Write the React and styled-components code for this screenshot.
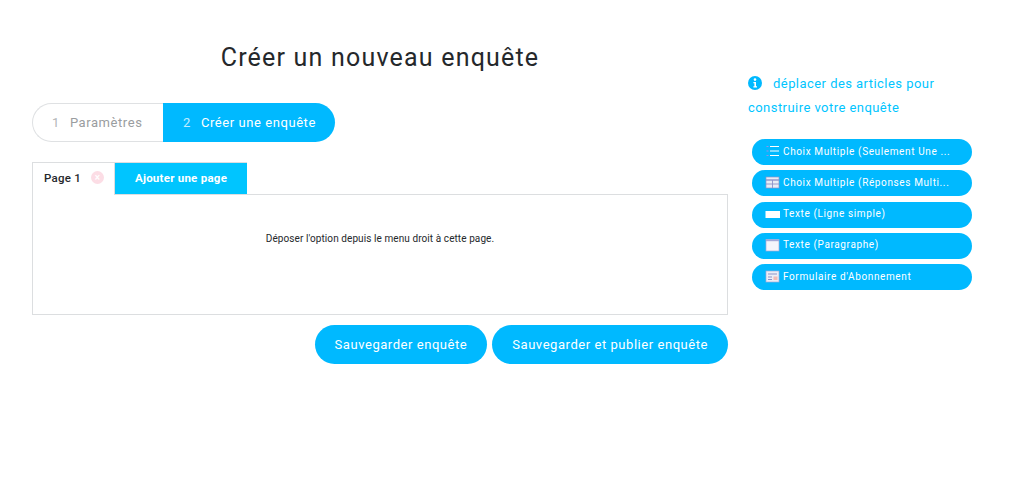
import React from "react";
import styled, { createGlobalStyle } from "styled-components";

const Global = createGlobalStyle`
  html, body { margin: 0; background: #fff; }
  body { font-family: Roboto, "Liberation Sans", sans-serif; }
`;

const Page = styled.div`
  width: 1024px;
  height: 480px;
  overflow: hidden;
  display: flex;
  align-items: flex-start;
  padding-left: 32px;
  box-sizing: border-box;
`;

const Main = styled.main`
  width: 696px;
  padding-top: 43px;
`;

const Title = styled.h1`
  margin: 0;
  height: 29px;
  font-size: 25px;
  line-height: 29px;
  font-weight: 400;
  letter-spacing: 1.2px;
  text-align: center;
  color: #25282b;
`;

const Stepper = styled.div`
  display: flex;
  margin-top: 31px;
  height: 39px;
`;

const Step = styled.div`
  display: flex;
  align-items: center;
  box-sizing: border-box;
  font-size: 13px;
  letter-spacing: 0.57px;
  width: ${(p) => (p.$active ? "172px" : "131px")};
  padding-left: ${(p) => (p.$active ? "20px" : "19px")};
  color: ${(p) => (p.$active ? "#fff" : "#9a9da0")};
  background: ${(p) => (p.$active ? "#00b9ff" : "#fff")};
  border: ${(p) => (p.$active ? "none" : "1px solid #dfe1e3")};
  border-right: none;
  border-radius: ${(p) => (p.$active ? "0 20px 20px 0" : "20px 0 0 20px")};
`;

const StepNumber = styled.span`
  margin-right: 10px;
  opacity: 0.75;
`;

const Tabs = styled.div`
  display: flex;
  margin-top: 20px;
  height: 32px;
`;

const Tab = styled.div`
  display: flex;
  align-items: center;
  box-sizing: border-box;
  width: 83px;
  height: 33px;
  padding: 0 0 3px 11px;
  background: #fff;
  border: 1px solid #dcdee0;
  border-bottom: none;
  position: relative;
  z-index: 1;
  font-size: 11.5px;
  font-weight: 500;
  letter-spacing: 0.25px;
  color: #25282b;
`;

const TabClose = styled.span`
  width: 13px;
  height: 13px;
  margin-left: 10px;
  border-radius: 50%;
  background: #fcdde5;
  display: flex;
  align-items: center;
  justify-content: center;
  color: #fff;
  font-size: 10px;
  line-height: 1;
`;

const AddTab = styled.button`
  width: 132px;
  height: 32px;
  padding: 0 0 2px;
  border: none;
  border-top: 1px solid #dcdee0;
  background: #00c5ff;
  color: #fff;
  font-family: inherit;
  font-size: 11.5px;
  font-weight: 700;
  letter-spacing: 0.25px;
`;

const Panel = styled.section`
  box-sizing: border-box;
  height: 121px;
  padding-top: 37px;
  border: 1px solid #dcdee0;
  text-align: center;
  font-size: 10px;
  line-height: 14px;
  letter-spacing: 0.08px;
  color: #25282b;
`;

const Actions = styled.div`
  display: flex;
  justify-content: flex-end;
  gap: 5px;
  margin-top: 10px;
`;

const ActionButton = styled.button`
  height: 39px;
  padding: 0 20px;
  border: none;
  border-radius: 20px;
  background: #00b9ff;
  color: #fff;
  font-family: inherit;
  font-size: 13px;
  letter-spacing: 0.55px;
  white-space: nowrap;
`;

const Side = styled.aside`
  width: 232px;
  margin-left: 20px;
  padding-top: 72px;
`;

const Hint = styled.p`
  margin: 0;
  font-size: 13px;
  line-height: 24px;
  letter-spacing: 0.45px;
  color: #00c5ff;
`;

const HintIcon = styled.svg`
  width: 14px;
  height: 14px;
  margin-right: 11px;
  vertical-align: -2px;
`;

const Palette = styled.ul`
  list-style: none;
  margin: 19px 0 0 4px;
  padding: 0;
  width: 220px;
  display: flex;
  flex-direction: column;
  gap: 5.25px;
`;

const PaletteItem = styled.li`
  display: flex;
  align-items: center;
  box-sizing: border-box;
  height: 26px;
  padding: 0 12px 2px 13px;
  border-radius: 14px;
  background: #00b9ff;
  color: #fff;
  font-size: 10px;
  letter-spacing: 0.62px;
`;

const ItemIcon = styled.svg`
  flex: none;
  width: 15px;
  height: 14px;
  margin-right: 3px;
`;

const ItemLabel = styled.span`
  white-space: nowrap;
`;

const icons = {
  list: (
    <>
      <path d="M5 2.5h9M5 7h9M5 11.5h9" stroke="#fff" strokeWidth="1" />
      <path d="M1.5 2.5h2M1.5 7h2M1.5 11.5h2" stroke="#9a8de8" strokeWidth="1" />
    </>
  ),
  grid: (
    <>
      <rect x="1" y="2" width="13" height="11" fill="#e9ecf5" stroke="#8d93c9" strokeWidth="0.7" />
      <path d="M1 5h13" stroke="#8d93c9" strokeWidth="1.4" />
      <path d="M7.5 5v8M1 9h13" stroke="#8d93c9" strokeWidth="0.9" />
    </>
  ),
  line: <rect x="0.5" y="4" width="14.5" height="7" fill="#fff" />,
  paragraph: (
    <>
      <rect x="1" y="1.5" width="13" height="11.5" fill="#f4f5fb" stroke="#a4a8d8" strokeWidth="0.7" />
      <path d="M1 2.5h13" stroke="#a4a8d8" strokeWidth="1.4" />
    </>
  ),
  form: (
    <>
      <rect x="1" y="2" width="13" height="11" fill="#eceef6" stroke="#a4a8d8" strokeWidth="0.7" />
      <path d="M3 5h9M3 8h4M3 10.5h4" stroke="#8d93c9" strokeWidth="1" />
      <rect x="8.5" y="7.5" width="4" height="3.5" fill="#f59b8f" opacity="0.6" />
    </>
  ),
};

const items = [
  ["list", "Choix Multiple (Seulement Une ..."],
  ["grid", "Choix Multiple (Réponses Multi..."],
  ["line", "Texte (Ligne simple)"],
  ["paragraph", "Texte (Paragraphe)"],
  ["form", "Formulaire d'Abonnement"],
];

const App = () => {
  return (
    <Page>
      <Global />
      <Main>
        <Title>Créer un nouveau enquête</Title>
        <Stepper>
          <Step>
            <StepNumber>1</StepNumber> Paramètres
          </Step>
          <Step $active>
            <StepNumber>2</StepNumber> Créer une enquête
          </Step>
        </Stepper>
        <Tabs>
          <Tab>
            Page 1
            <TabClose>×</TabClose>
          </Tab>
          <AddTab>Ajouter une page</AddTab>
        </Tabs>
        <Panel>Déposer l'option depuis le menu droit à cette page.</Panel>
        <Actions>
          <ActionButton>Sauvegarder enquête</ActionButton>
          <ActionButton>Sauvegarder et publier enquête</ActionButton>
        </Actions>
      </Main>
      <Side>
        <Hint>
          <HintIcon viewBox="0 0 14 14">
            <circle cx="7" cy="7" r="7" fill="#00b9ff" />
            <circle cx="7" cy="3.6" r="1.3" fill="#fff" />
            <path d="M5.4 6h2.6v4.2h1v1.2H5.4v-1.2h1V7.2h-1z" fill="#fff" />
          </HintIcon>
          déplacer des articles pour
          <br />
          construire votre enquête
        </Hint>
        <Palette>
          {items.map(([icon, label]) => (
            <PaletteItem key={label}>
              <ItemIcon viewBox="0 0 15 14">{icons[icon]}</ItemIcon>
              <ItemLabel>{label}</ItemLabel>
            </PaletteItem>
          ))}
        </Palette>
      </Side>
    </Page>
  );
};

export default App;
